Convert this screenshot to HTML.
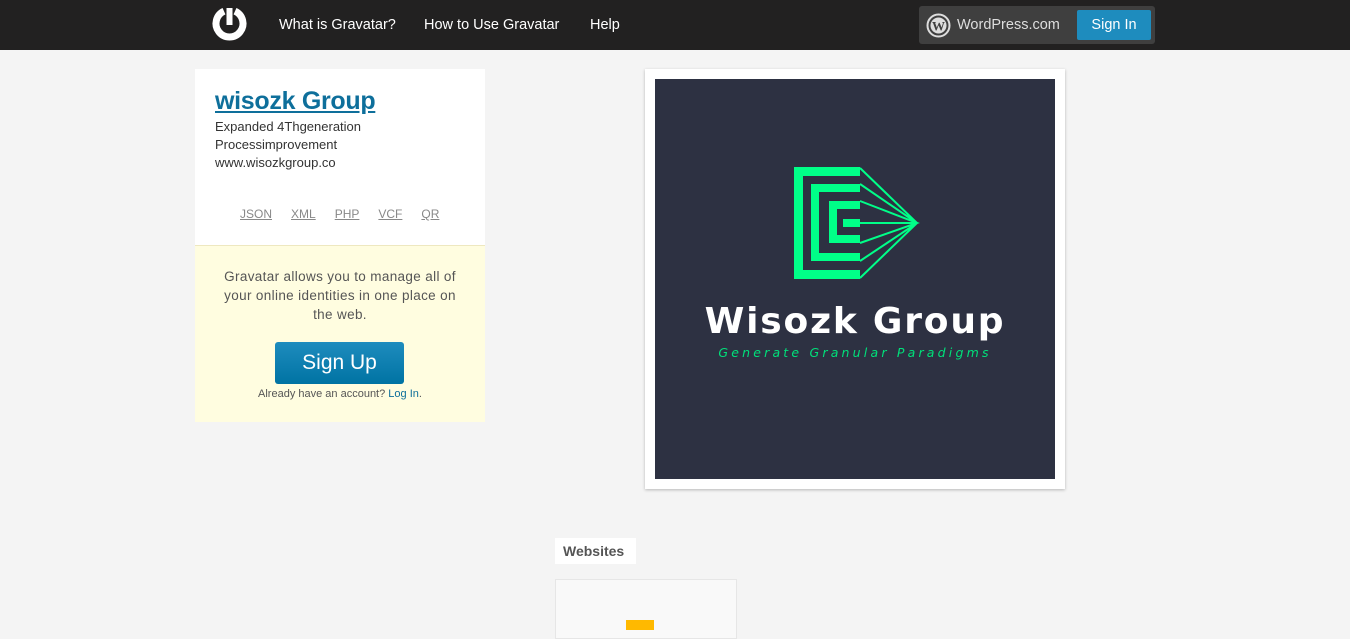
<!DOCTYPE html>
<html><head><meta charset="utf-8"><style>
*{margin:0;padding:0;box-sizing:border-box}
body{width:1350px;height:625px;overflow:hidden;background:#f4f4f4;font-family:"Liberation Sans","DejaVu Sans",sans-serif;position:relative}
.hdr{position:absolute;left:0;top:0;width:1350px;height:50px;background:#222121}
.nav{position:absolute;top:17px;color:#fff;font-size:14.5px}
.wpbox{position:absolute;left:919px;top:6px;width:236px;height:38px;background:#3f3f3f;border-radius:3px}
.wpbox .t{position:absolute;left:38px;top:11px;color:#ddd;font-size:14.5px}
.si{position:absolute;left:158px;top:4px;width:74px;height:30px;background:#1e8cbe;border-radius:2px;color:#fff;font-size:14.5px;text-align:center;line-height:31px}
.card{position:absolute;left:195px;top:69px;width:290px;height:176px;background:#fff}
.card h1{position:absolute;left:20px;top:18px;font-size:25px;color:#0e6f9b;text-decoration:underline;font-weight:bold;letter-spacing:-0.3px}
.card .d{position:absolute;left:20px;top:49px;font-size:13px;line-height:18px;color:#333}
.links{position:absolute;top:138px;left:45px;font-size:12px;color:#888}
.links span{text-decoration:underline;margin-right:19px}
.promo{position:absolute;left:195px;top:245px;width:290px;height:177px;background:#fffde0;border-top:1px solid #eee8c0;text-align:center;color:#555}
.promo p{position:absolute;left:18px;width:254px;top:21px;font-size:13.5px;line-height:19px;letter-spacing:0.35px}
.btn{position:absolute;left:80px;top:96px;width:129px;height:42px;border-radius:3px;background:linear-gradient(#1e8cbe,#0073a3);color:#fff;font-size:21px;line-height:42px}
.al{position:absolute;top:142px;width:290px;font-size:11px;color:#555}
.al span{color:#0e6f9b}
.av{position:absolute;left:645px;top:69px;width:420px;height:420px;background:#fff;box-shadow:0 1px 3px rgba(0,0,0,.25)}
.ws{position:absolute;left:555px;top:538px;width:81px;height:26px;background:#fff;color:#555;font-weight:bold;font-size:14px;line-height:26px;padding-left:8px}
.wc{position:absolute;left:555px;top:579px;width:182px;height:60px;background:#f9f9f9;border:1px solid #e6e6e6}
</style></head><body>
<div class="hdr">
<svg style="position:absolute;left:211px;top:6px" width="37" height="37" viewBox="0 0 37 37"><path d="M13 5.2A13.5 13.5 0 1 0 24 5.2" fill="none" stroke="#fff" stroke-width="7"/><rect x="15.5" y="2" width="6" height="17" fill="#fff"/></svg>
<div class="nav" style="left:279px">What is Gravatar?</div>
<div class="nav" style="left:424px">How to Use Gravatar</div>
<div class="nav" style="left:590px">Help</div>
<div class="wpbox"><svg style="position:absolute;left:7px;top:7px" width="25" height="25" viewBox="0 0 25 25"><circle cx="12.5" cy="12.5" r="11" fill="none" stroke="#ddd" stroke-width="2"/><circle cx="12.5" cy="12.5" r="8" fill="#ddd"/><text x="12.5" y="17.5" font-size="13" font-family="Liberation Serif" font-weight="bold" fill="#3f3f3f" text-anchor="middle">W</text></svg><div class="t">WordPress.com</div><div class="si">Sign In</div></div>
</div>
<div class="card">
<h1>wisozk Group</h1>
<div class="d">Expanded 4Thgeneration<br>Processimprovement<br>www.wisozkgroup.co</div>
<div class="links"><span>JSON</span><span>XML</span><span>PHP</span><span>VCF</span><span>QR</span></div>
</div>
<div class="promo"><p>Gravatar allows you to manage all of your online identities in one place on the web.</p>
<div class="btn">Sign Up</div><div class="al">Already have an account? <span>Log In</span>.</div></div>
<div class="av">
<svg style="position:absolute;left:10px;top:10px" width="400" height="400" viewBox="655 79 400 400">
<rect x="655" y="79" width="400" height="400" fill="#2d3142"/>
<g fill="#00ff88">
<path d="M794 167H860V176H803V270H860V279H794Z"/>
<path d="M811 184H860V192H819V253H860V261H811Z"/>
<path d="M829 201H860V209H837V235H860V243H829Z"/>
<rect x="843" y="219" width="17" height="8"/>
</g>
<g stroke="#00ff88" stroke-width="2" fill="none">
<path d="M860 168L917 223L860 278M860 184L917 223L860 261M860 201L917 223L860 243M860 223H917"/>
</g>
<text x="855" y="333" font-family="DejaVu Sans" font-weight="bold" font-size="36" fill="#fff" text-anchor="middle" letter-spacing="1.8">Wisozk Group</text>
<text x="855" y="357" font-family="DejaVu Sans" font-style="italic" font-size="12.5" fill="#00e07a" text-anchor="middle" letter-spacing="3.2">Generate Granular Paradigms</text>
</svg>
</div>
<div class="ws">Websites</div>
<div class="wc"><div style="position:absolute;left:70px;top:40px;width:28px;height:10px;background:#ffb900"></div></div>
</body></html>
